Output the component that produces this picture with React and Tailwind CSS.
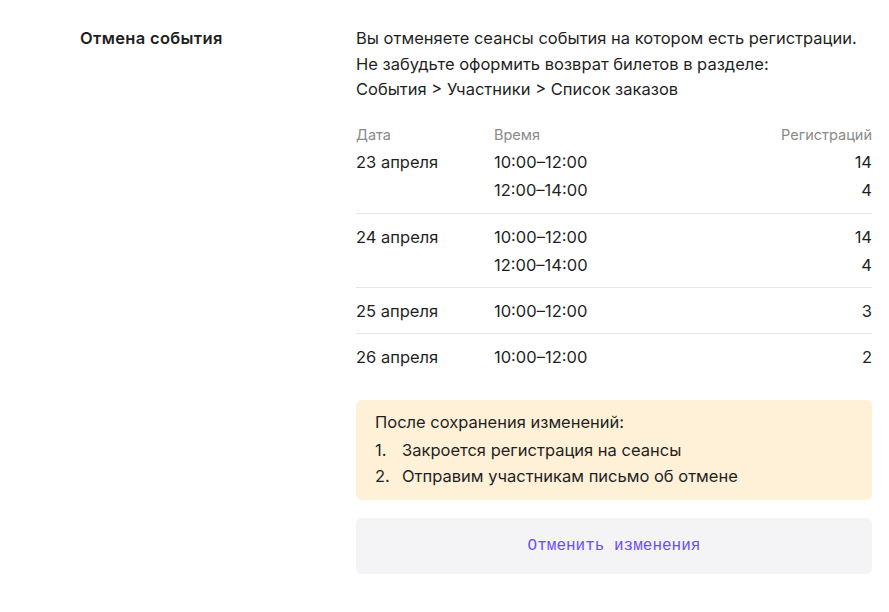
const sessions = [
  { date: "23 апреля", rows: [["10:00–12:00", 14], ["12:00–14:00", 4]] },
  { date: "24 апреля", rows: [["10:00–12:00", 14], ["12:00–14:00", 4]] },
  { date: "25 апреля", rows: [["10:00–12:00", 3]] },
  { date: "26 апреля", rows: [["10:00–12:00", 2]] },
];

export default function App() {
  return (
    <div
      className="min-h-screen bg-white text-[#1f1f1f] flex pt-[26px] pl-[80px] pr-[17px]"
      style={{ fontFamily: "Inter, 'Noto Sans', sans-serif" }}
    >
      <div className="w-[276px] shrink-0">
        <h2 className="text-[16.5px] font-semibold tracking-[0.02em] leading-[25px]">
          Отмена события
        </h2>
      </div>

      <div className="flex-1 flex flex-col">
        <p className="text-[16.5px] leading-[25.5px]">
          Вы отменяете сеансы события на котором есть регистрации.
          <br />
          Не забудьте оформить возврат билетов в разделе:
          <br />
          События &gt; Участники &gt; Список заказов
        </p>

        <div className="mt-[22px] text-[16.5px]">
          <div className="flex text-[14.5px] leading-5 text-[#8a8a8a]">
            <div className="w-[138px]">Дата</div>
            <div className="flex-1">Время</div>
            <div>Регистраций</div>
          </div>

          {sessions.map((s, i) => (
            <div
              key={s.date}
              className={
                i === 0
                  ? "flex pt-[3.5px] pb-[9px]"
                  : "flex py-[8.5px] border-t border-[#e6e6e6]"
              }
            >
              <div className="w-[138px] leading-7">{s.date}</div>
              <div className="flex-1">
                {s.rows.map(([time, count]) => (
                  <div key={time} className="flex justify-between leading-7">
                    <span>{time}</span>
                    <span>{count}</span>
                  </div>
                ))}
              </div>
            </div>
          ))}
        </div>

        <div className="mt-[21px] rounded-md bg-[#fff0d8] pl-[19px] pr-4 pt-[9px] pb-[11px] text-[16.5px] leading-[26px]">
          <p>После сохранения изменений:</p>
          <ol className="mt-[2px]">
            <li className="flex">
              <span className="w-[27px]">1.</span>
              <span>Закроется регистрация на сеансы</span>
            </li>
            <li className="flex">
              <span className="w-[27px]">2.</span>
              <span>Отправим участникам письмо об отмене</span>
            </li>
          </ol>
        </div>

        <button
          type="button"
          className="mt-[18px] h-14 w-full rounded-md bg-[#f4f4f6] text-[16px] text-[#6a4cff]"
          style={{ fontFamily: "'Liberation Mono', monospace" }}
        >
          Отменить изменения
        </button>
      </div>
    </div>
  );
}
